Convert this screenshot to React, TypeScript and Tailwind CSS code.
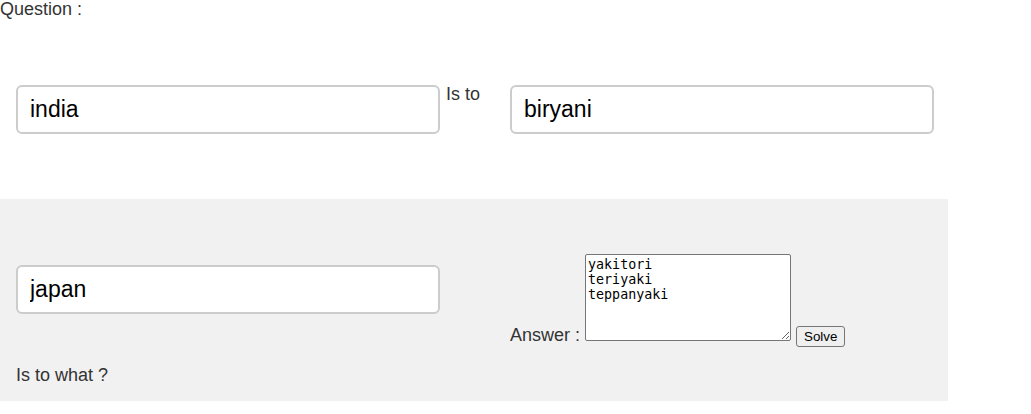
const sans = { fontFamily: '"Liberation Sans", Arial, sans-serif' }

function WordBox({ value }: { value: string }) {
  return (
    <input
      type="text"
      defaultValue={value}
      className="w-[424px] h-[49px] shrink-0 rounded-md border-2 border-[#cccccc] bg-white pl-[12px] text-[23px] text-black outline-none"
      style={sans}
    />
  )
}

export default function App() {
  return (
    <div className="min-h-[414px] bg-white text-[#333333]" style={sans}>
      <div className="text-[18px] leading-none">Question :</div>

      {/* first pair */}
      <div className="mt-[67px] flex items-start pl-4">
        <WordBox value="india" />
        <span className="-mt-px w-[70px] shrink-0 pl-[6px] text-[18px] leading-5">Is to</span>
        <WordBox value="biryani" />
      </div>

      {/* question pair */}
      <div className="mt-[65px] flex h-[202px] w-[948px] items-start bg-[#f1f1f1]">
        <div className="w-[510px] shrink-0 pl-4 pt-[66px]">
          <WordBox value="japan" />
          <div className="mt-[51px] text-[18px] leading-5">Is to what ?</div>
        </div>
        <div className="pt-[55px] text-[18px]">
          <span>Answer :</span>
          <textarea
            defaultValue={'yakitori\nteriyaki\nteppanyaki'}
            className="ml-[5px] h-[87px] w-[206px] rounded-[2px] border border-[#767676] bg-white p-[2px] align-baseline text-[13.33px] leading-[15px] text-black"
            style={{ fontFamily: '"DejaVu Sans Mono", monospace' }}
          />
          <button className="ml-[5px] rounded-[3px] border border-[#767676] bg-[#efefef] px-[7px] py-[2px] text-[13.33px] leading-[15px] text-black">
            Solve
          </button>
        </div>
      </div>
    </div>
  )
}
